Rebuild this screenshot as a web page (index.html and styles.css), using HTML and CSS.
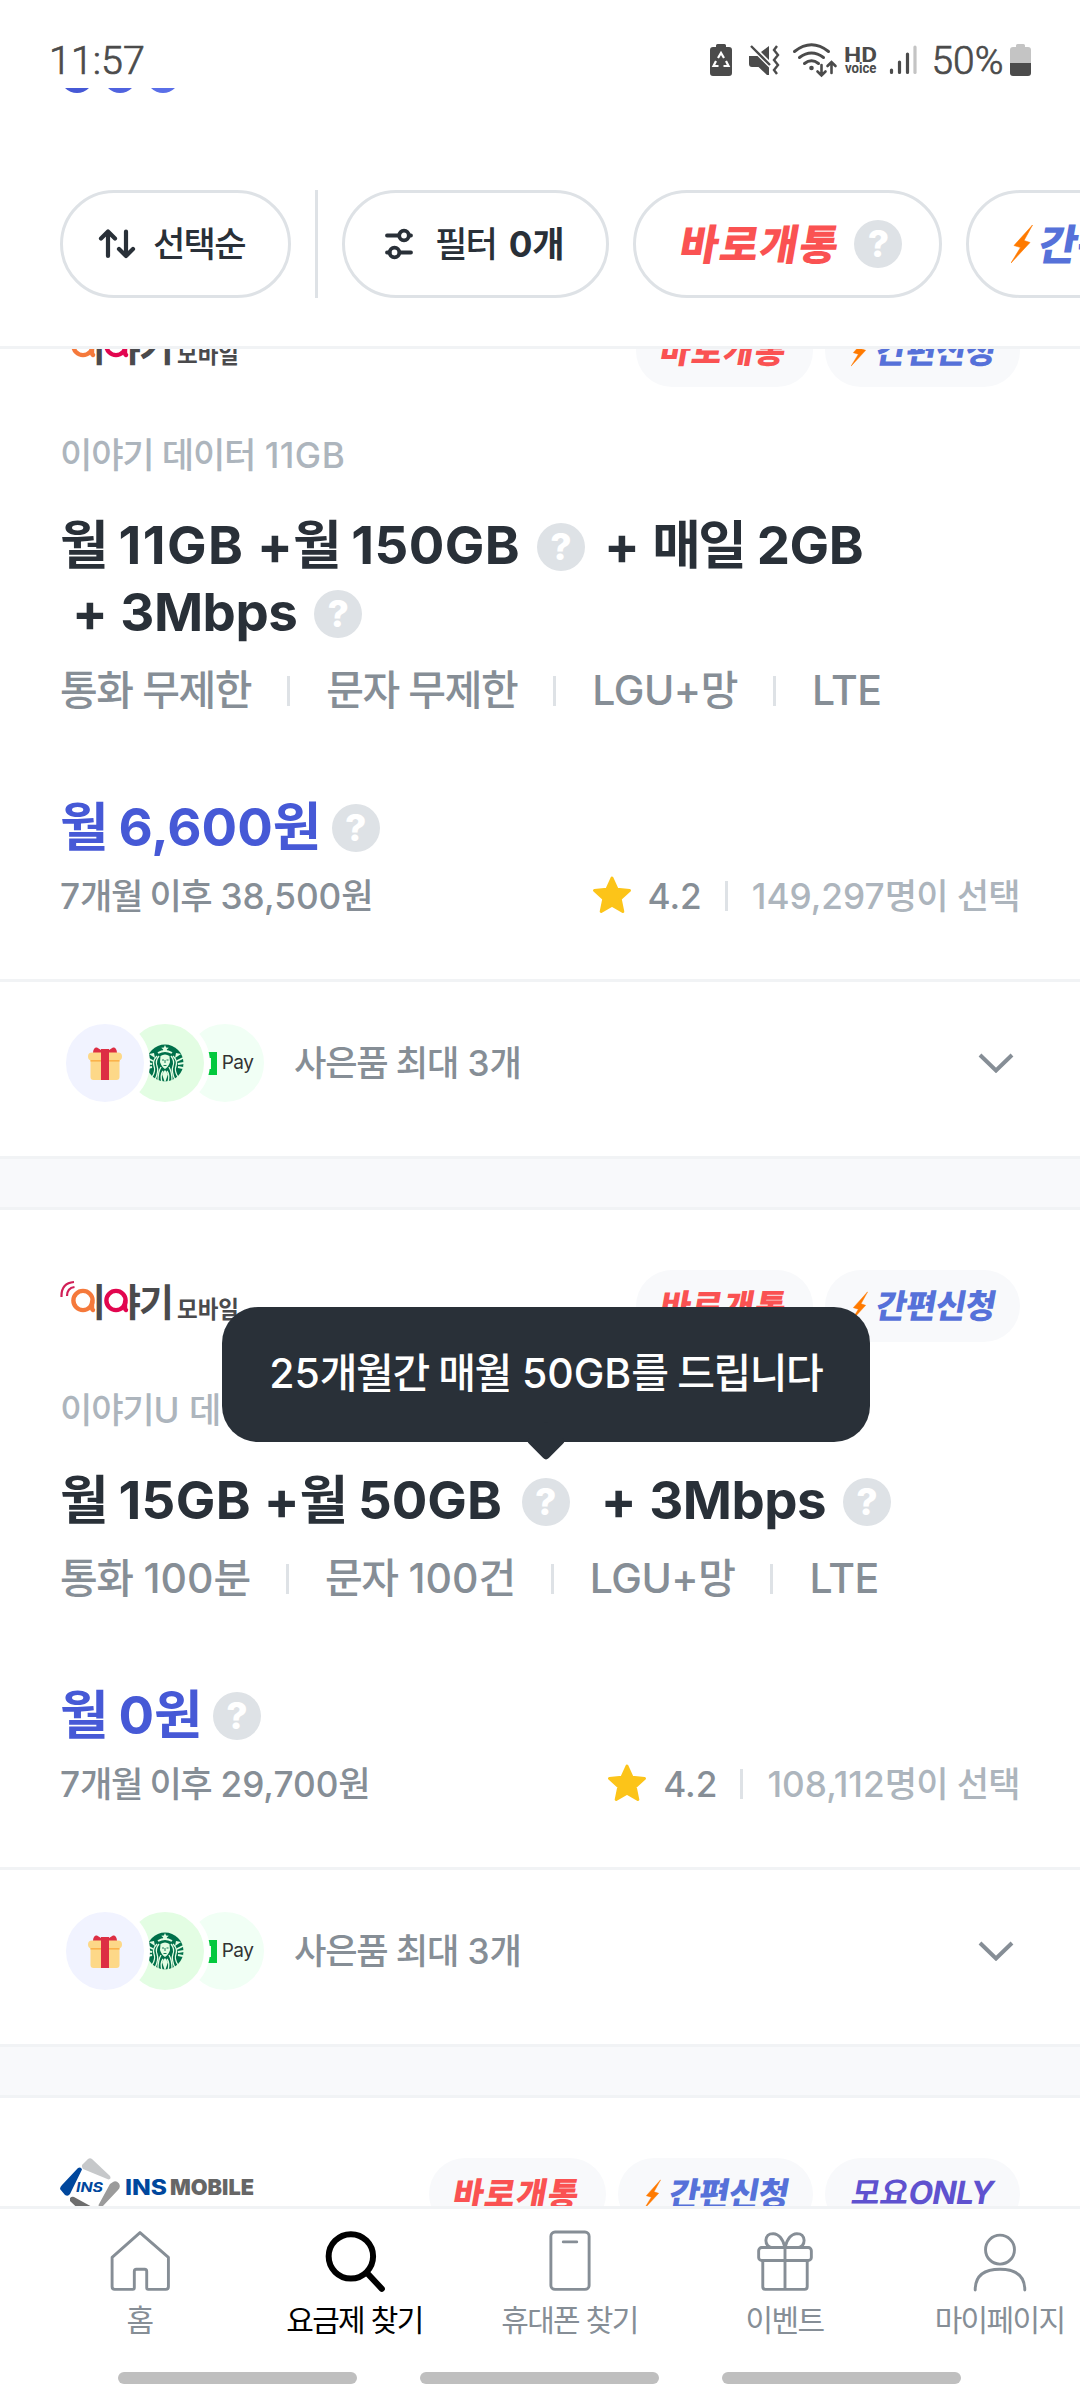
FILE: index.html
```html
<!DOCTYPE html>
<html lang="ko">
<head>
<meta charset="utf-8">
<title>요금제 찾기</title>
<link rel="stylesheet" href="styles.css">
</head>
<body>
<svg class="defs" aria-hidden="true">
  <symbol id="i-bolt" viewBox="0 0 22 38"><path fill="#ff7a00" stroke="#ff7a00" stroke-width=".6" d="M21.500 0 3 20.500l6.500 2L0 38l19-20.500-6-2z"/></symbol>
  <symbol id="i-star" viewBox="0 0 40 38"><path fill="#fcc419" stroke="#fcc419" stroke-width="3" stroke-linejoin="round" d="M20 2l5 11.200 12.500 1.300-9.300 8.300 2.600 12.700L20 29.300 9.200 35.500l2.600-12.700-9.300-8.300L15 13.200z"/></symbol>
  <symbol id="i-chevron" viewBox="0 0 36 20"><path fill="none" stroke="#868e96" stroke-width="4" d="M2 2l16 15.500L34 2"/></symbol>
  <symbol id="i-gift" viewBox="0 0 34 34">
    <path fill="#dd2e44" d="M5 7c0-4 2-6 4-5.500L13 4q4-2 8 0l4-2.500c2-.500 4 1.500 4 5.500z"/>
    <rect x="2.500" y="9" width="29" height="25" rx="3" fill="#fdd888"/>
    <rect x="0" y="6.500" width="34" height="8" rx="4" fill="#fdd888"/>
    <rect x="2.500" y="14" width="29" height="1.600" fill="#fbb24a"/>
    <path fill="#dd2e44" d="M13 3h8v31h-8z"/>
  </symbol>
  <symbol id="i-siren" viewBox="0 0 38 40">
    <circle cx="19" cy="20" r="18.500" fill="#00704a"/>
    <g fill="none" stroke="#e3fde3" stroke-width="1.300">
      <path d="M13 13q-4 5-2 10t-2 14M11 13q-5 5-3 10t-2 11M15 24q-3 5-3 14M17 28q-3 4-1 11"/>
      <path d="M25 13q4 5 2 10t2 14M27 13q5 5 3 10t2 11M23 24q3 5 3 14M21 28q3 4 1 11"/>
      <path d="M1 15l6 3M0 20l6 1M1 25l5-1M37 15l-6 3M38 20l-6 1M37 25l-5-1" stroke-width="1.800"/>
      <path d="M12 10q7-4 14 0" stroke-width="2"/>
    </g>
    <path fill="#e3fde3" d="M14.500 13q4.500-3 9 0l.500 6q-1.500 5-5 7-3.500-2-5-7zM19 2l1.100 2.400 2.700.300-2 1.800.600 2.600-2.400-1.300-2.400 1.300.600-2.600-2-1.800 2.700-.300zM19 27l3 4-3 9-3-9zM3 11l5-1 1 5zM35 11l-5-1-1 5z"/>
    <path fill="none" stroke="#00704a" stroke-width=".9" d="M16 17h2M20.500 17h2M19 17v3M17.500 22.500h3"/>
  </symbol>
  <symbol id="logo-eyagi" viewBox="0 0 180 42">
    <g fill="#4a4a4c" font-family="'Noto Sans CJK KR', sans-serif">
      <text class="logo-word" x="11 46 79" y="36">이야기</text>
      <text class="logo-sub" x="117" y="38" textLength="62" lengthAdjust="spacingAndGlyphs">모바일</text>
    </g>
    <path fill="#fff" d="M8 5h28v30H8zM43 5h25v30H43z"/>
    <g fill="none" stroke-width="4.400">
      <circle cx="23" cy="20.500" r="9.600" stroke="#f5793b"/>
      <path stroke="#f5793b" stroke-linecap="round" d="M32 22v5q0 2.500 1 3"/>
      <circle cx="56" cy="20.500" r="9.600" stroke="#e2064f"/>
      <path stroke="#e2064f" stroke-linecap="round" d="M65 22v5q0 2.500 1 3"/>
    </g>
    <path fill="none" stroke="#d11f57" stroke-width="2.200" d="M1.500 17Q1 3 14 2M7 16q0-8 7.500-9"/>
  </symbol>
</svg>

<div class="phone">
  <div class="status">
    <span class="clock">11:57</span>
    <svg class="sys" viewBox="0 0 340 40" width="340" height="40">
      <g fill="#4b4b4b">
        <path d="M16 6V4.500Q16 3 17.500 3h7Q26 3 26 4.500V6h3q3 0 3 3v23q0 3-3 3H13q-3 0-3-3V9q0-3 3-3z"/>
        <path d="M49 15h8.500L69 26.500V34h-2l-8.500-8H52q-3 0-3-3zM61 11l8-6v14z"/>
      </g>
      <path fill="none" stroke="#fff" stroke-width="2.200" d="M18 17l3-5 3 5M16 20l-2.500 5h5M26 20l2.500 5h-5"/>
      <path fill="none" stroke="#4b4b4b" stroke-width="2.400" d="M51 5l19 19M77 5l-3 4 4 5-4 5 4 5-4 5 3 4"/>
      <g fill="none" stroke="#4b4b4b" stroke-width="3" stroke-linecap="round">
        <path d="M94.500 10.500q17-13.500 34 0M99.500 16.500q12-9 24 0M104.500 22.500q7-5.500 14 0"/>
        <path stroke-width="2.600" d="M121.500 24v10M117.500 30.500l4 4 4-4M131.500 32V21.500M127.500 25l4-4 4 4"/>
      </g>
      <circle cx="111.500" cy="27" r="2.300" fill="#4b4b4b"/>
      <text class="hd" x="144" y="20.500" textLength="33" lengthAdjust="spacingAndGlyphs">HD</text>
      <text class="voice" x="145" y="32" textLength="31.500" lengthAdjust="spacingAndGlyphs">voice</text>
      <g stroke="#4b4b4b" stroke-width="3.200" stroke-linecap="round">
        <path d="M191.500 29v2.500M199.500 21v10.500M207.500 13v18.500"/><path stroke="#c4c4c4" d="M215 6v25.500"/>
      </g>
      <text class="pct" x="231.500" y="33" textLength="72" lengthAdjust="spacingAndGlyphs">50%</text>
      <path fill="#c4c4c4" d="M316 6V4.500Q316 3 317.500 3h6Q325 3 325 4.500V6h3q3 0 3 3v13h-21V9q0-3 3-3z"/>
      <path fill="#4b4b4b" d="M310 22h21v10q0 3-3 3h-15q-3 0-3-3z"/>
    </svg>
  </div>

  <header class="top">
    <div class="dots"><i></i><i></i><i></i></div>
    <div class="chips">
      <div class="chip sort">
        <svg width="36" height="30" viewBox="0 0 36 30" fill="none" stroke="#293038" stroke-width="4.200" stroke-linecap="round" stroke-linejoin="round"><path d="M9 27V2.500M2 9.500l7-7 7 7M27 2.500V27M20 20l7 7 7-7"/></svg>
        <span class="k tight">선택순</span>
      </div>
      <div class="rule"></div>
      <div class="chip filter">
        <svg width="28" height="30" viewBox="0 0 28 30" fill="none" stroke="#293038" stroke-width="3.800" stroke-linecap="round"><path d="M2 6.500h12M24 6.500h2M2 23.500h2.500M15 23.500h11"/><circle cx="19" cy="6.500" r="4.800"/><circle cx="9.500" cy="23.500" r="4.800"/></svg>
        <span><span class="k tight">필터</span> <b>0<span class="k">개</span></b></span>
      </div>
      <div class="chip now"><span class="tag red big">바로개통</span><i class="help">?</i></div>
      <div class="chip easy"><svg class="bolt" width="22" height="38"><use href="#i-bolt"/></svg><span class="tag blue big">간편신청</span></div>
    </div>
  </header>

  <main class="list">
    <div class="scroll">
      <article class="card">
        <div class="body">
          <div class="head">
            <svg class="brand" width="180" height="42"><use href="#logo-eyagi"/></svg>
            <span class="pill p1"><span class="tag red">바로개통</span></span>
            <span class="pill p2"><svg class="bolt" width="17" height="33"><use href="#i-bolt"/></svg><span class="tag blue">간편신청</span></span>
          </div>
          <p class="name"><span class="k">이야기 데이터</span> <span class="n1">11GB</span></p>
          <h2 class="title"><span class="k tight">월</span> <span class="n3">11GB</span> +<span class="k tight">월</span> <span class="n4">150GB</span><i class="help in">?</i><span class="plus">+ <span class="k tight">매일</span> <span class="mb">2GB</span></span><br><span class="plus lead">+ <span class="mb">3Mbps</span></span><i class="help in">?</i></h2>
          <ul class="spec"><li><span class="k">통화 무제한</span></li><li><span class="k">문자 무제한</span></li><li><span class="lt">LGU+</span><span class="k">망</span></li><li><span class="lt">LTE</span></li></ul>
          <div class="price"><span class="k tight">월</span> 6,600<span class="k tight">원</span><i class="help in">?</i></div>
          <div class="meta">
            <span class="after">7<span class="k">개월 이후</span> 38,500<span class="k">원</span></span>
            <svg class="star" width="40" height="38"><use href="#i-star"/></svg>
            <span class="score">4.2</span><span class="count">149,297<span class="k">명이 선택</span></span>
          </div>
        </div>
        <div class="gifts">
          <div class="coins">
            <span class="coin c1"><svg width="34" height="34"><use href="#i-gift"/></svg></span>
            <span class="coin c2"><svg width="38" height="40"><use href="#i-siren"/></svg></span>
            <span class="coin c3"><svg width="11" height="23" viewBox="0 0 11 23"><path fill="#03c93d" d="M0 0h11v23H0v-6h5V6H0z"/></svg><span class="pay">Pay</span></span>
          </div>
          <span class="label"><span class="k">사은품 최대</span> 3<span class="k">개</span></span>
          <svg class="chev" width="36" height="20"><use href="#i-chevron"/></svg>
        </div>
      </article>

      <article class="card">
        <div class="body">
          <div class="head">
            <svg class="brand" width="180" height="42"><use href="#logo-eyagi"/></svg>
            <span class="pill p1"><span class="tag red">바로개통</span></span>
            <span class="pill p2"><svg class="bolt" width="17" height="33"><use href="#i-bolt"/></svg><span class="tag blue">간편신청</span></span>
          </div>
          <p class="name"><span class="k">이야기</span>U <span class="k">데</span></p>
          <h2 class="title"><span class="k tight">월</span> <span class="n4">15GB</span> +<span class="k tight">월</span> 50GB<i class="help in open">?<span class="tip">25<span class="k">개월간 매월</span> 50GB<span class="k">를 드립니다</span></span></i><span class="plus wide">+ <span class="mb">3Mbps</span></span><i class="help in">?</i></h2>
          <ul class="spec"><li><span><span class="k">통화</span> 100<span class="k">분</span></span></li><li><span><span class="k">문자</span> 100<span class="k">건</span></span></li><li><span class="lt">LGU+</span><span class="k">망</span></li><li><span class="lt">LTE</span></li></ul>
          <div class="price"><span class="k tight">월</span> 0<span class="k tight">원</span><i class="help in">?</i></div>
          <div class="meta">
            <span class="after">7<span class="k">개월 이후</span> 29,700<span class="k">원</span></span>
            <svg class="star" width="40" height="38"><use href="#i-star"/></svg>
            <span class="score">4.2</span><span class="count">108,112<span class="k">명이 선택</span></span>
          </div>
        </div>
        <div class="gifts">
          <div class="coins">
            <span class="coin c1"><svg width="34" height="34"><use href="#i-gift"/></svg></span>
            <span class="coin c2"><svg width="38" height="40"><use href="#i-siren"/></svg></span>
            <span class="coin c3"><svg width="11" height="23" viewBox="0 0 11 23"><path fill="#03c93d" d="M0 0h11v23H0v-6h5V6H0z"/></svg><span class="pay">Pay</span></span>
          </div>
          <span class="label"><span class="k">사은품 최대</span> 3<span class="k">개</span></span>
          <svg class="chev" width="36" height="20"><use href="#i-chevron"/></svg>
        </div>
      </article>

      <article class="card">
        <div class="body">
          <div class="head">
            <svg class="brand ins" width="200" height="72" viewBox="0 0 200 72">
              <path fill="#c6c8ca" d="M22 7l6-6q2-1.500 4 0l18 17q1.500 3-1.500 3.500L23 11q-1.500-2-1-4z"/>
              <path fill="#9b9b9b" d="M53 24q3-2 6 1.500 2 3.500-1 6.500L42 49q-3 1-3.500-2L50 26z"/>
              <path fill="#00479d" d="M0 31q0-2 2-4l16-17q3-1.500 4 1.500L10 36q-2 3-5 1z"/>
              <path fill="#6d6d6d" d="M10 40q2-2 4-1l20 11-3 8H26L10 43z"/>
              <text class="ins-mini" x="16" y="34" textLength="27" lengthAdjust="spacingAndGlyphs">INS</text>
              <text class="ins-a" x="65" y="37" textLength="42" lengthAdjust="spacingAndGlyphs">INS</text>
              <text class="ins-b" x="110" y="37" textLength="84" lengthAdjust="spacingAndGlyphs">MOBILE</text>
            </svg>
            <span class="pill p1"><span class="tag red">바로개통</span></span>
            <span class="pill p2"><svg class="bolt" width="17" height="33"><use href="#i-bolt"/></svg><span class="tag blue">간편신청</span></span>
            <span class="pill p3"><span class="tag violet"><span class="moyo">모요</span><span class="only">ONLY</span></span></span>
          </div>
        </div>
      </article>
    </div>
  </main>

  <nav class="tabs">
    <a class="tab"><svg viewBox="0 0 60 60"><path d="M30 2.500 3 26.500V55q0 2.500 2.500 2.500H23q1.500 0 1.500-1.500V40q0-2 2-2h8q2 0 2 2v16q0 1.500 1.500 1.500h17q2.500 0 2.500-2.500V26.500z"/></svg><span class="k">홈</span></a>
    <a class="tab on"><svg viewBox="0 0 60 60"><circle cx="26" cy="25.500" r="21.500"/><path d="M42 42l14 15"/></svg><span class="k">요금제 찾기</span></a>
    <a class="tab"><svg viewBox="0 0 60 60"><rect x="11.500" y="2" width="37" height="55.500" rx="4"/><path d="M23.500 11.500h13"/></svg><span class="k">휴대폰 찾기</span></a>
    <a class="tab"><svg viewBox="0 0 60 60"><rect x="4.500" y="17" width="51" height="12.500" rx="3"/><path d="M8.500 29.500V55q0 2.500 2.500 2.500h38q2.500 0 2.500-2.500V29.500M30 17v40.500M30 17H17.500Q11.500 16 11.500 10q.500-6.500 7-6.500Q27 4 30 17zM30 17h12.500q6-1 6-7-.500-6.500-7-6.500Q33 4 30 17z"/></svg><span class="k">이벤트</span></a>
    <a class="tab"><svg viewBox="0 0 60 60"><circle cx="30" cy="19" r="14"/><path d="M6 58q0-20 24-20t24 20"/></svg><span class="k">마이페이지</span></a>
  </nav>
  <div class="bars"><i></i><i></i><i></i></div>
</div>
</body>
</html>
```
FILE: styles.css
```css
* { box-sizing: border-box; }

body {
  margin: 0;
  background: #fff;
  font-family: Inter, "Noto Sans CJK KR", sans-serif;
  color: #293038;
}

p, h2, ul { margin: 0; padding: 0; }
i { font-style: normal; }
svg { display: block; flex: none; overflow: visible; }

.defs { position: absolute; width: 0; height: 0; }

/* Hangul runs are set a little tighter than the font's own advance */
.k { letter-spacing: -0.034em; }
.k.tight { letter-spacing: -0.05em; }

.phone {
  display: flex;
  flex-direction: column;
  width: 1080px;
  height: 2400px;
  overflow: hidden;
}

/* status bar */
.status {
  display: flex;
  justify-content: space-between;
  align-items: flex-start;
  flex: none;
  height: 88px;
  padding: 41px 40px 0 49px;
  font-family: Roboto, sans-serif;
}
.clock { font-size: 39.500px; font-weight: 300; line-height: 40px; color: #4b4b4b; -webkit-text-stroke: 0.7px #4b4b4b; }
.hd { font: 700 21px Roboto, sans-serif; fill: #4b4b4b; }
.voice { font: 700 14.500px Roboto, sans-serif; fill: #4b4b4b; }
.pct { font: 300 39px Roboto, sans-serif; fill: #4b4b4b; stroke: #4b4b4b; stroke-width: .7px; }

/* filter header */
.top {
  flex: none;
  height: 261px;
  border-bottom: 3px solid #f1f3f5;
  overflow: hidden;
}
.dots { display: flex; gap: 9px; height: 5px; padding-left: 60px; align-items: flex-end; overflow: hidden; }
.dots i { flex: none; width: 34px; height: 34px; border-radius: 50%; background: #4659d6; }
.dots i:nth-child(2) { background: #5063df; }
.dots i:nth-child(3) { background: #5a6fe8; }

.chips { display: flex; gap: 24px; padding: 97px 0 0 60px; width: 1400px; }
.chip {
  display: flex;
  align-items: center;
  flex: none;
  height: 108px;
  border: 3px solid #dee2e6;
  border-radius: 54px;
  font-size: 35.200px;
  line-height: 54px;
  font-weight: 500;
}
.chip b { font-weight: 700; margin-left: 3px; }
.sort { width: 231px; padding-left: 36px; gap: 18px; }
.rule { width: 3px; height: 108px; background: #dee2e6; flex: none; }
.filter { width: 267px; padding-left: 40px; gap: 22px; }
.now { width: 309px; padding-left: 45px; gap: 14px; }
.easy { width: 330px; padding-left: 42px; gap: 7px; }

.help {
  display: inline-flex;
  position: relative;
  align-items: center;
  justify-content: center;
  flex: none;
  width: 48px;
  height: 48px;
  border-radius: 50%;
  background: #dee2e6;
  color: #fff;
  font-size: 37px;
  line-height: 48px;
  font-weight: 800;
}
.help.in { margin-left: 17px; vertical-align: 4px; }
.help.in.open { margin-left: 20px; }

.tag {
  display: inline-block;
  font-family: "Noto Sans CJK KR", sans-serif;
  font-size: 33px;
  line-height: 40px;
  font-weight: 900;
  white-space: nowrap;
  transform: translateY(-2px) skewX(-10deg);
}
.red { color: #fa5252; letter-spacing: 1.2px; }
.blue { color: #5671d9; letter-spacing: -0.6px; }
.tag.big { font-size: 42px; line-height: 50px; }

/* plan list */
.list { flex: none; height: 1857px; overflow: hidden; background: #f8f9fb; }
.scroll { display: flex; flex-direction: column; gap: 48px; margin-top: -97px; }
.card { background: #fff; border-top: 3px solid #f1f3f5; border-bottom: 3px solid #f1f3f5; }
.body { padding: 60px 60px 56px; }
.head { display: flex; gap: 12px; height: 72px; }
.brand { margin: 10px auto 0 0; }
.brand.ins { margin-top: 0; }
.logo-word { font-size: 38px; font-weight: 700; }
.logo-sub { font-size: 24px; font-weight: 700; }
.ins-mini { font: italic 700 13px Inter, sans-serif; fill: #00479d; }
.ins-a { font: 800 21px Inter, sans-serif; fill: #00479d; }
.ins-b { font: 900 22px Inter, sans-serif; fill: #666; }

.pill {
  display: flex;
  align-items: center;
  height: 72px;
  border-radius: 36px;
  background: #f8f9fb;
}
.p1 { width: 177px; justify-content: center; }
.p2 { width: 195px; padding-left: 26px; gap: 9px; }
.p3 { width: 195px; justify-content: center; }
.violet { display: flex; align-items: baseline; color: #5f52cf; }
.moyo { font-size: 31px; font-weight: 700; }
.only { font: 700 32px/40px Inter, sans-serif; letter-spacing: -0.8px; }

.name { margin-top: 41px; font-size: 35.200px; line-height: 54px; font-weight: 500; color: #adb5bd; }
.n1 { letter-spacing: 0.5px; }
.title { margin-top: 30px; font-size: 52.800px; line-height: 67px; font-weight: 700; white-space: nowrap; }
.n3 { letter-spacing: 1.5px; }
.n4 { letter-spacing: 0.4px; }
.mb { letter-spacing: -0.5px; }
.plus { margin-left: 19px; }
.plus.lead { margin-left: 12px; }
.plus.wide { margin-left: 31px; }

.spec { display: flex; margin-top: 13px; list-style: none; font-size: 41px; line-height: 63px; font-weight: 500; color: #868e96; }
.spec li { display: flex; align-items: center; white-space: pre; }
.spec li + li::before { content: ""; width: 3px; height: 30px; margin: 0 36px; background: #dee2e6; }
.lt { letter-spacing: -0.5px; }

.price { margin-top: 72px; font-size: 52.800px; line-height: 67px; font-weight: 700; color: #4659d6; }
.price .help.in { margin-left: 13px; vertical-align: 5px; }

.meta { display: flex; align-items: center; margin-top: 8px; font-size: 35.200px; line-height: 54px; font-weight: 500; color: #868e96; white-space: pre; }
.after .k { letter-spacing: -0.045em; }
.star { margin: -2px 16px 0 auto; }
.score { margin-right: 23px; }
.count { display: flex; align-items: center; color: #adb5bd; }
.count .k { letter-spacing: -0.02em; }
.count::before { content: ""; width: 3px; height: 30px; margin-right: 24px; background: #dee2e6; }

.gifts { display: flex; align-items: center; height: 177px; padding: 0 66px 12px 60px; border-top: 3px solid #f1f3f5; }
.coins { display: flex; }
.coin {
  position: relative;
  display: flex;
  align-items: center;
  justify-content: center;
  width: 90px;
  height: 90px;
  border: 6px solid #fff;
  border-radius: 50%;
}
.c1 { z-index: 3; background: #f1f3ff; }
.c2 { z-index: 2; margin-left: -30px; background: #e3fde3; }
.c3 { z-index: 1; margin-left: -30px; background: #f1fff5; gap: 5px; padding-left: 9px; }
.pay { font: 400 19px/24px Inter, sans-serif; color: #333; letter-spacing: -0.5px; }
.label { margin-left: 24px; font-size: 35.200px; line-height: 54px; font-weight: 500; color: #868e96; }
.chev { margin-left: auto; }

.tip {
  position: absolute;
  left: 50%;
  bottom: 84px;
  z-index: 10;
  width: 648px;
  height: 135px;
  transform: translateX(-50%);
  border-radius: 36px;
  background: #293038;
  color: #fff;
  text-align: center;
  font-size: 41px;
  line-height: 133px;
  font-weight: 500;
}
.tip::after {
  content: "";
  position: absolute;
  left: 50%;
  bottom: -13px;
  width: 28px;
  height: 28px;
  margin-left: -14px;
  border-radius: 4px;
  background: #293038;
  transform: rotate(45deg);
}

/* bottom navigation */
.tabs { display: flex; flex: none; height: 160px; padding: 21px 0 0 32px; border-top: 3px solid #f1f3f5; background: #fff; width: 1107px; }
.tab { display: flex; flex-direction: column; align-items: center; width: 215px; font-size: 30px; line-height: 44px; font-weight: 400; color: #868e96; white-space: nowrap; }
.tab .k { letter-spacing: -0.055em; }
.tab svg { width: 62px; height: 62px; margin-bottom: 6px; fill: none; stroke: #868e96; stroke-width: 2.800; stroke-linecap: round; stroke-linejoin: round; }
.tab.on { color: #000; }
.tab.on svg { stroke: #000; stroke-width: 5.800; }

.bars { display: flex; flex: none; gap: 63px; padding: 6px 0 0 118px; }
.bars i { width: 239px; height: 12px; border-radius: 6px; background: #bfbfbf; }
```
